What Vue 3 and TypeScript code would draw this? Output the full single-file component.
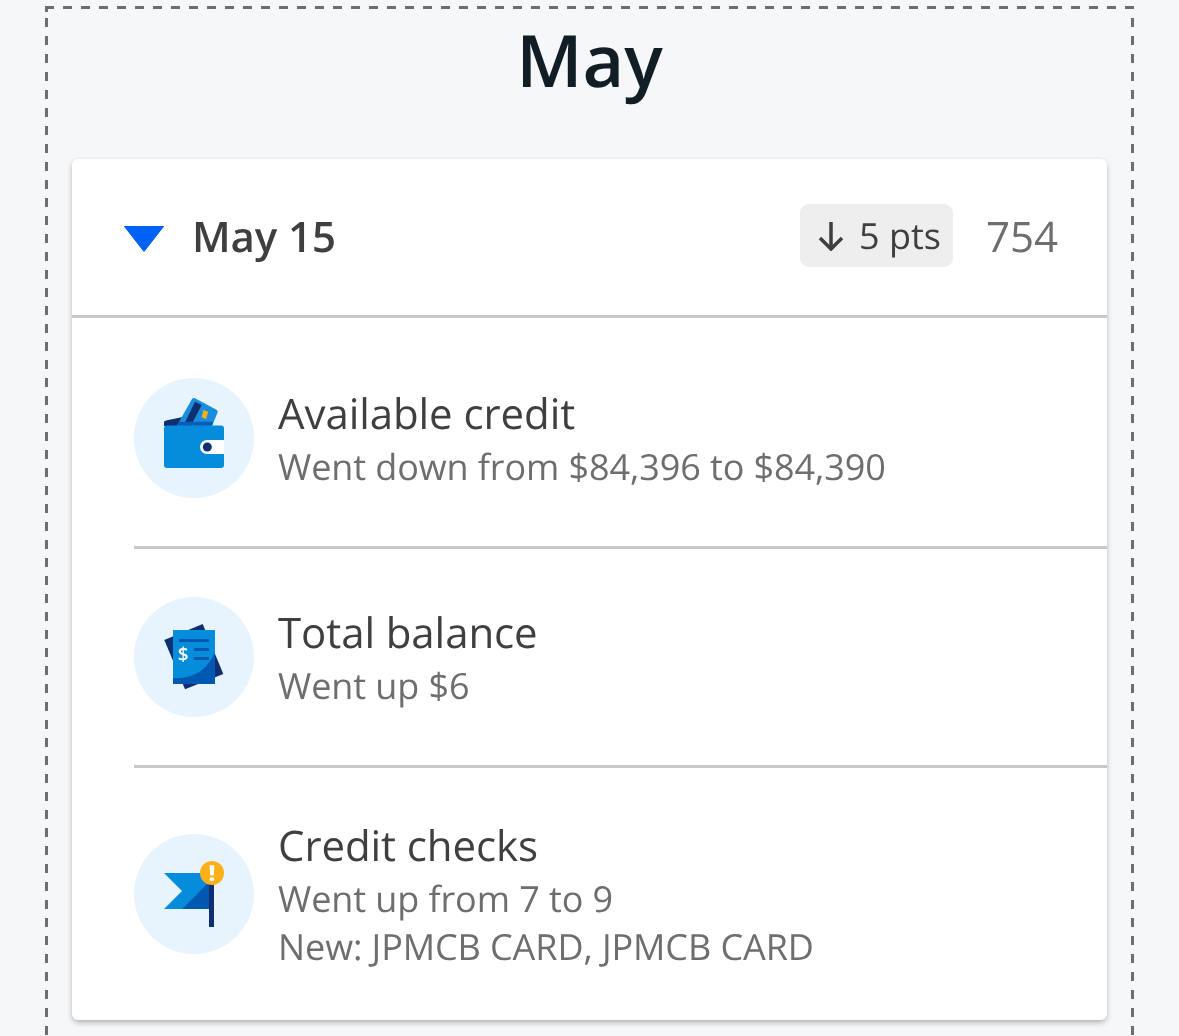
<script setup lang="ts">
interface Row { title: string; lines: string[]; icon: 'wallet' | 'doc' | 'flag' }
const rows: Row[] = [
  { title: 'Available credit', lines: ['Went down from $84,396 to $84,390'], icon: 'wallet' },
  { title: 'Total balance', lines: ['Went up $6'], icon: 'doc' },
  { title: 'Credit checks', lines: ['Went up from 7 to 9', 'New: JPMCB CARD, JPMCB CARD'], icon: 'flag' },
]
</script>

<template>
  <div class="page">
    <section class="frame">
      <h1 class="month">May</h1>
      <article class="card">
        <header class="head">
          <svg class="caret" viewBox="0 0 40 26" width="40" height="26" aria-hidden="true">
            <path d="M.5 .5h39L20 25.500z" fill="#0061f5" stroke="#0061f5" stroke-width="1" stroke-linejoin="round" />
          </svg>
          <span class="date">May 15</span>
          <span class="chip">
            <svg viewBox="0 0 26 30" width="26" height="30" aria-hidden="true">
              <path d="M13 1v27M2 17l11 11 11-11" fill="none" stroke="#3f3f3f" stroke-width="3.500" />
            </svg>
            <span class="pts">5 pts</span>
          </span>
          <span class="score">754</span>
        </header>
        <ul class="list">
          <li v-for="row in rows" :key="row.title" class="row">
            <div class="badge">
              <svg v-if="row.icon === 'wallet'" viewBox="0 0 120 120" width="120" height="120" aria-hidden="true">
                <path d="M30 48v-4q0-1 2-1.500l31-6.500v12z" fill="#0f2f73" />
                <path d="M42.700 48 58 21q1-1.500 3-.700l21.500 11.500q1.700 1 1 2.900L78 48z" fill="#1a8ddc" />
                <path d="M49.300 48 61 23.700l6.700 3.300L56.700 48z" fill="#0f2f73" />
                <path d="M45.300 43.700h34l-1.300 4H43z" fill="#0a5cb8" />
                <path d="M69.300 32l5 1.700-2.300 7.300-4.300-1.700z" fill="#fbb017" />
                <path d="M30 50.500q0-3 3-3h54q3 0 3 3V87q0 3-3 3H33q-3 0-3-3z" fill="#058cdb" />
                <path d="M90 62H73a7 7 0 0 0 0 14h17z" fill="#fff" />
                <circle cx="73.300" cy="69" r="4.500" fill="#0f2f73" />
              </svg>
              <svg v-else-if="row.icon === 'doc'" viewBox="0 0 120 120" width="120" height="120" aria-hidden="true">
                <path d="M30.300 43 68.700 27 89.300 77 51 92.300z" fill="#0f2f73" />
                <rect x="39" y="33" width="42" height="54" fill="#058cdb" />
                <path d="M39 81q30 2 42-26v32H39z" fill="#0058b0" />
                <path d="M45 42h30v3H45zM60 51h15v3H60zM60 60h15v3H60z" fill="#0058b0" />
                <text x="49.300" y="64" class="dollar">$</text>
              </svg>
              <svg v-else viewBox="0 0 120 120" width="120" height="120" aria-hidden="true">
                <path d="M30 39h45v36H30l18-18z" fill="#058cdb" />
                <path d="M48.300 75 75 48v27z" fill="#0058b0" />
                <rect x="75" y="39" width="5" height="54" fill="#0f2f73" />
                <circle cx="78" cy="39" r="12" fill="#fbb017" />
                <text x="78" y="47" class="bang">!</text>
              </svg>
            </div>
            <div class="copy">
              <div class="title">{{ row.title }}</div>
              <div v-for="line in row.lines" :key="line" class="sub">{{ line }}</div>
            </div>
          </li>
        </ul>
      </article>
    </section>
  </div>
</template>

<style>
html, body { margin: 0; background: #f5f7f9; overflow: hidden; }
</style>

<style scoped>
.page {
  height: 1036px;
  overflow: hidden;
  background: #f5f7f9;
  padding: 6px 45px 0;
  box-sizing: border-box;
  font-family: "Open Sans", "Noto Sans", sans-serif;
  text-rendering: geometricPrecision;
}
.frame {
  will-change: transform;
  padding: 3px 27px 40px;
  background-image:
    linear-gradient(90deg, #6e6e6e 9px, transparent 9px),
    linear-gradient(#6e6e6e 9px, transparent 9px),
    linear-gradient(#6e6e6e 9px, transparent 9px),
    linear-gradient(#6e6e6e, #6e6e6e);
  background-size: 18px 3px, 3px 18px, 3px 18px, 3px 6px;
  background-position: 0 0, 0 12px, 100% 12px, 0 0;
  background-repeat: repeat-x, repeat-y, repeat-y, no-repeat;
}
.month {
  margin: 0 0 47px;
  height: 103px;
  line-height: 103px;
  font-size: 72px;
  font-weight: 600;
  color: #121e26;
  text-align: center;
}
.card {
  background: #fff;
  border-radius: 6px;
  box-shadow: 0 3px 6px -1px rgba(0, 0, 0, .32), 0 0 3px rgba(0, 0, 0, .06);
}
.head {
  display: flex;
  align-items: center;
  height: 153px;
  padding: 0 49px 3px 52px;
  border-bottom: 3px solid #c8c8c8;
}
.caret { flex: none; margin: 7px 28px 0 0; }
.date {
  flex: 1;
  padding-top: 2px;
  font-size: 42px;
  font-weight: 600;
  color: #3f3f3f;
  letter-spacing: -0.1px;
}
.chip {
  display: flex;
  align-items: center;
  gap: 15px;
  height: 63px;
  padding: 0 12px 0 18px;
  border-radius: 9px;
  background: #eee;
  color: #3f3f3f;
  font-size: 36px;
}
.score {
  margin-left: 33px;
  padding-top: 2px;
  font-size: 42px;
  color: #6e6e6e;
}
.list {
  list-style: none;
  margin: 0;
  padding: 12px 0 0 62px;
}
.row {
  display: flex;
  align-items: center;
  gap: 24px;
  padding: 48px 0;
}
.row:not(:last-child) { border-bottom: 3px solid #c8c8c8; }
.badge {
  flex: none;
  width: 120px;
  height: 120px;
  border-radius: 50%;
  background: #e7f4fe;
}
.badge svg { display: block; }
.copy { margin: -1px 0 1px; }
.title {
  margin-bottom: -2px;
  font-size: 42px;
  line-height: 62px;
  color: #3f3f3f;
  letter-spacing: -0.08px;
}
.sub {
  font-size: 36px;
  line-height: 48px;
  color: #6e6e6e;
  letter-spacing: -0.09px;
}
.dollar {
  font-family: "Open Sans", sans-serif;
  font-size: 19px;
  font-weight: 600;
  fill: #fff;
  text-anchor: middle;
}
.bang {
  font-family: "Open Sans", sans-serif;
  font-size: 22px;
  font-weight: 800;
  fill: #fff;
  text-anchor: middle;
}
</style>
